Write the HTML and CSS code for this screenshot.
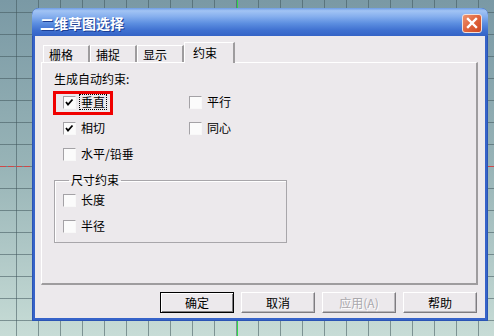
FILE: index.html
```html
<!DOCTYPE html>
<html lang="zh-CN">
<head>
  <meta charset="UTF-8">
  <title>二维草图选择</title>
  <link rel="stylesheet" href="styles.css">
</head>
<body>

<div class="desktop">
  <div class="guide-red"></div>
  <div class="guide-green"></div>

  <div class="window">
    <div class="titlebar">
      <span class="title">二维草图选择</span>
      <span class="close-btn">
        <svg width="12" height="12" viewBox="0 0 12 12">
          <path d="M2 2 L10 10 M10 2 L2 10" stroke="#fff" stroke-width="2.4" stroke-linecap="square"/>
        </svg>
      </span>
    </div>

    <div class="frame">
      <div class="client">
        <div class="tabs">
          <div class="tab">栅格</div>
          <div class="tab">捕捉</div>
          <div class="tab">显示</div>
          <div class="tab active">约束</div>
        </div>

        <div class="panel">
          <div class="label">生成自动约束:</div>

          <div class="checks">
            <div class="check highlight">
              <span class="box on"><svg width="11" height="11" viewBox="0 0 11 11"><polyline points="2,5 4,7.5 8.5,2.5" fill="none" stroke="#000" stroke-width="1.8"/></svg></span>
              <span class="text focus">垂直</span>
            </div>
            <div class="check">
              <span class="box"></span>
              <span class="text">平行</span>
            </div>
            <div class="check">
              <span class="box on"><svg width="11" height="11" viewBox="0 0 11 11"><polyline points="2,5 4,7.5 8.5,2.5" fill="none" stroke="#000" stroke-width="1.8"/></svg></span>
              <span class="text">相切</span>
            </div>
            <div class="check">
              <span class="box"></span>
              <span class="text">同心</span>
            </div>
            <div class="check">
              <span class="box"></span>
              <span class="text">水平/铅垂</span>
            </div>
          </div>

          <fieldset class="group">
            <legend>尺寸约束</legend>
            <div class="check">
              <span class="box"></span>
              <span class="text">长度</span>
            </div>
            <div class="check">
              <span class="box"></span>
              <span class="text">半径</span>
            </div>
          </fieldset>
        </div>

        <div class="buttons">
          <button class="btn default">确定</button>
          <button class="btn">取消</button>
          <button class="btn" disabled>应用(A)</button>
          <button class="btn">帮助</button>
        </div>
      </div>
    </div>
  </div>
</div>

</body>
</html>
```

FILE: styles.css
```css
body {
  margin: 0;
  font-family: "Noto Sans CJK SC", "Liberation Sans", sans-serif;
  font-size: 12px;
}

.desktop {
  position: relative;
  width: 494px;
  height: 336px;
  overflow: hidden;
  box-sizing: border-box;
  padding: 8px 0 0 32px;
  background:
    repeating-linear-gradient(90deg, transparent 0, transparent 16px, rgba(64, 86, 92, 0.55) 16px, rgba(64, 86, 92, 0.55) 17px, transparent 17px, transparent 22px),
    repeating-linear-gradient(180deg, transparent 0, transparent 12px, rgba(64, 86, 92, 0.55) 12px, rgba(64, 86, 92, 0.55) 13px, transparent 13px, transparent 22px),
    linear-gradient(180deg, #7a99a5 0%, #98b4b7 50%, #c7dcd6 100%);
}

.guide-red {
  position: absolute;
  left: 0;
  right: 0;
  top: 166px;
  height: 1px;
  background: repeating-linear-gradient(90deg, #d04848 0, #d04848 6px, transparent 6px, transparent 8px);
}

.guide-green {
  position: absolute;
  top: 0;
  bottom: 0;
  left: 237px;
  width: 1px;
  background: #2ed84a;
}

.window {
  position: relative;
  width: 456px;
  height: 313px;
  border-radius: 7px 7px 0 0;
  background: #3663c9;
  display: flex;
  flex-direction: column;
  box-shadow: inset 0 0 0 1px #2a54b4;
}

.titlebar {
  height: 28px;
  box-sizing: border-box;
  padding: 2px 6px 0 8px;
  display: flex;
  align-items: center;
  justify-content: space-between;
  border-radius: 7px 7px 0 0;
  background: linear-gradient(180deg, #6d9be4 0%, #a2c4f4 10%, #86afee 30%, #5c8ee0 55%, #3f70d0 80%, #3463c6 100%);
}

.title {
  color: #fff;
  font-weight: bold;
  font-size: 14px;
  text-shadow: 1px 1px 0 #1c3f94;
}

.close-btn {
  width: 20px;
  height: 19px;
  box-sizing: border-box;
  border: 1px solid #f4e0d8;
  border-radius: 3px;
  background: linear-gradient(135deg, #ee9470 0%, #e0643c 50%, #cc4822 100%);
  display: flex;
  align-items: center;
  justify-content: center;
}

.frame {
  flex: 1;
  padding: 0 3px 3px 3px;
  display: flex;
}

.client {
  flex: 1;
  background: #ece9ec;
  box-sizing: border-box;
  padding: 6px 7px 0 6px;
  display: flex;
  flex-direction: column;
}

.tabs {
  display: flex;
  align-items: flex-end;
  height: 21px;
  padding-left: 2px;
}

.tab {
  height: 18px;
  box-sizing: border-box;
  width: 47px;
  padding: 1px 0 0 5px;
  line-height: 16px;
  border-top: 1px solid #fff;
  border-left: 1px solid #fff;
  border-right: 2px solid #9e9c9e;
  background: #ece9ec;
}

.tab.active {
  position: relative;
  z-index: 1;
  height: 21px;
  width: 51px;
  padding-top: 2px;
  padding-left: 8px;
}

.panel {
  height: 223px;
  margin-top: -1px;
  box-sizing: border-box;
  border-top: 1px solid #fff;
  border-left: 1px solid #fff;
  border-right: 2px solid #9e9c9e;
  border-bottom: 2px solid #9e9c9e;
  padding: 9px 0 0 12px;
}

.label {
  height: 14px;
  line-height: 14px;
}

.checks {
  display: grid;
  grid-template-columns: 126px 126px;
  row-gap: 12px;
  margin: 9px 0 0 9px;
}

.check {
  position: relative;
  display: flex;
  align-items: center;
  height: 14px;
  gap: 3px;
}

.check.highlight::after {
  content: "";
  position: absolute;
  left: -10px;
  top: -4px;
  width: 54px;
  height: 18px;
  border: 3px solid #f00000;
}

.box {
  width: 13px;
  height: 13px;
  box-sizing: border-box;
  border: 1px solid;
  border-color: #a4a2a6 #f8f8f8 #f8f8f8 #a4a2a6;
  background: #fbfbfb;
  display: flex;
  align-items: center;
  justify-content: center;
}

.text {
  padding: 0 1px;
  line-height: 14px;
  border: 1px solid transparent;
}

.text.focus {
  border: 1px dotted #000;
}

.group {
  width: 233px;
  height: 70px;
  box-sizing: border-box;
  margin: 12px 0 0 0;
  padding: 6px 0 0 8px;
  border: 1px solid #a8a6aa;
  box-shadow: inset 1px 1px 0 #fff;
  display: flex;
  flex-direction: column;
  gap: 12px;
}

.group legend {
  padding: 0 2px;
  margin-left: 6px;
  line-height: 14px;
}

.buttons {
  display: flex;
  justify-content: flex-end;
  gap: 7px;
  margin-top: 7px;
  padding-right: 1px;
}

.btn {
  width: 74px;
  height: 21px;
  padding: 0;
  font-family: inherit;
  font-size: 12px;
  color: #000;
  background: #ece9ec;
  border: 1px solid;
  border-color: #fff #7e7c80 #7e7c80 #fff;
  box-shadow: inset -1px -1px 0 #b8b6ba;
}

.btn.default {
  border: 1px solid #000;
  box-shadow: inset 1px 1px 0 #fff, inset -1px -1px 0 #7e7c80;
}

.btn:disabled {
  color: #aaa8ac;
  text-shadow: 1px 1px 0 #fff;
}
```
